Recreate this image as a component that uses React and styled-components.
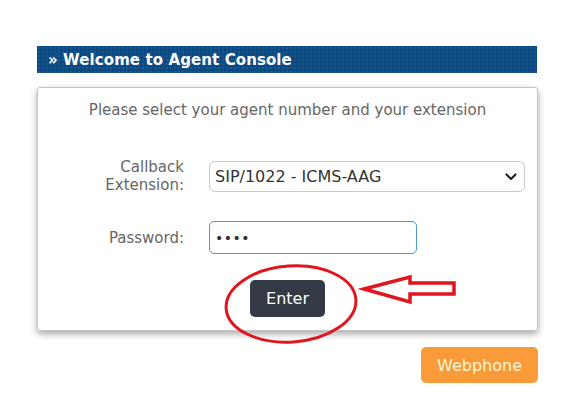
import styled, { createGlobalStyle } from "styled-components";

const GlobalStyle = createGlobalStyle`
  body {
    margin: 0;
    background: #fff;
    font-family: "DejaVu Sans", Verdana, sans-serif;
  }
`;

function ChevronDown() {
  return (
    <svg width="12" height="8" viewBox="0 0 12 8">
      <path
        d="M1.5 1.5 L6 6 L10.5 1.5"
        fill="none"
        stroke="#222"
        strokeWidth="2.2"
        strokeLinecap="round"
        strokeLinejoin="round"
      />
    </svg>
  );
}

function Annotation() {
  return (
    <StOverlay width="581" height="403" viewBox="0 0 581 403">
      <ellipse
        cx="291"
        cy="304"
        rx="65"
        ry="38"
        transform="rotate(-4 291 304)"
        fill="none"
        stroke="#e0161f"
        strokeWidth="3"
      />
      <path
        d="M364 289 L410 277 L410 283 L454 283 L454 294 L410 294 L410 302 Z"
        fill="none"
        stroke="#e0161f"
        strokeWidth="3.5"
        strokeLinejoin="miter"
      />
    </StOverlay>
  );
}

function App() {
  return (
    <StPage>
      <GlobalStyle />
      <StPanel>
        <StHeader>» Welcome to Agent Console</StHeader>
        <StCard>
          <StIntro>Please select your agent number and your extension</StIntro>
          <StForm>
            <StLabel>
              Callback
              <br />
              Extension:
            </StLabel>
            <StSelectWrap>
              <StSelect defaultValue="1022">
                <option value="1022">SIP/1022 - ICMS-AAG</option>
              </StSelect>
              <StChevron>
                <ChevronDown />
              </StChevron>
            </StSelectWrap>
            <StLabel>Password:</StLabel>
            <StInput type="password" defaultValue="abcd" readOnly />
          </StForm>
          <StActions>
            <StButton $variant="dark">Enter</StButton>
          </StActions>
        </StCard>
        <StFooter>
          <StButton $variant="orange">Webphone</StButton>
        </StFooter>
      </StPanel>
      <Annotation />
    </StPage>
  );
}

export default App;

const StPage = styled.div`
  position: relative;
  width: 581px;
  height: 403px;
  overflow: hidden;
  padding-top: 46px;
  box-sizing: border-box;
`;

const StOverlay = styled.svg`
  position: absolute;
  left: 0;
  top: 0;
  pointer-events: none;
`;

const StPanel = styled.div`
  width: 501px;
  margin-left: 37px;
  display: flex;
  flex-direction: column;
`;

const StHeader = styled.div`
  height: 27px;
  width: 500px;
  box-sizing: border-box;
  padding-left: 11px;
  display: flex;
  align-items: center;
  color: #fff;
  font-weight: bold;
  font-size: 15px;
  letter-spacing: 0.1px;
  background-color: #0c4a83;
  background-image: radial-gradient(
    rgba(255, 255, 255, 0.07) 1px,
    transparent 1.2px
  );
  background-size: 4px 4px;
`;

const StCard = styled.div`
  margin-top: 14px;
  height: 244px;
  box-sizing: border-box;
  border: 1px solid #c4c4c4;
  border-radius: 3px;
  box-shadow: 0 3px 7px rgba(0, 0, 0, 0.35);
  padding-top: 12px;
  display: flex;
  flex-direction: column;
`;

const StIntro = styled.div`
  text-align: center;
  color: #666;
  font-size: 15px;
  line-height: 20px;
`;

const StForm = styled.div`
  margin-top: 38px;
  display: grid;
  grid-template-columns: 146px 316px;
  column-gap: 25px;
  row-gap: 27px;
  align-items: center;
`;

const StLabel = styled.div`
  text-align: right;
  color: #666;
  font-size: 15px;
  line-height: 18px;
`;

const StSelectWrap = styled.div`
  position: relative;
  height: 31px;
`;

const StSelect = styled.select`
  appearance: none;
  width: 100%;
  height: 31px;
  box-sizing: border-box;
  border: 1px solid #c8c8c8;
  border-radius: 6px;
  background: #fff;
  padding: 0 30px 0 5px;
  font-family: "DejaVu Sans", Verdana, sans-serif;
  font-size: 16px;
  color: #333;
  outline: none;
`;

const StChevron = styled.span`
  position: absolute;
  right: 8px;
  top: 12px;
  line-height: 0;
  pointer-events: none;
`;

const StInput = styled.input`
  width: 208px;
  height: 33px;
  box-sizing: border-box;
  border: 1px solid #4f9bcc;
  border-radius: 5px;
  padding: 0 5px;
  font-family: "DejaVu Sans", Verdana, sans-serif;
  font-size: 14px;
  letter-spacing: 0.5px;
  color: #333;
  outline: none;
`;

const StActions = styled.div`
  margin-top: 26px;
  display: flex;
  justify-content: center;
`;

const StButton = styled.button`
  height: ${({ $variant }) => ($variant === "dark" ? "37px" : "36px")};
  padding: 0 ${({ $variant }) => ($variant === "dark" ? "16px" : "16px")};
  border: none;
  border-radius: 5px;
  font-family: "DejaVu Sans", Verdana, sans-serif;
  font-size: 16px;
  background: ${({ $variant }) =>
    $variant === "dark" ? "#343a45" : "#f89b38"};
  color: ${({ $variant }) => ($variant === "dark" ? "#fff" : "#fff5da")};
  cursor: pointer;
`;

const StFooter = styled.div`
  margin-top: 16px;
  display: flex;
  justify-content: flex-end;
`;
